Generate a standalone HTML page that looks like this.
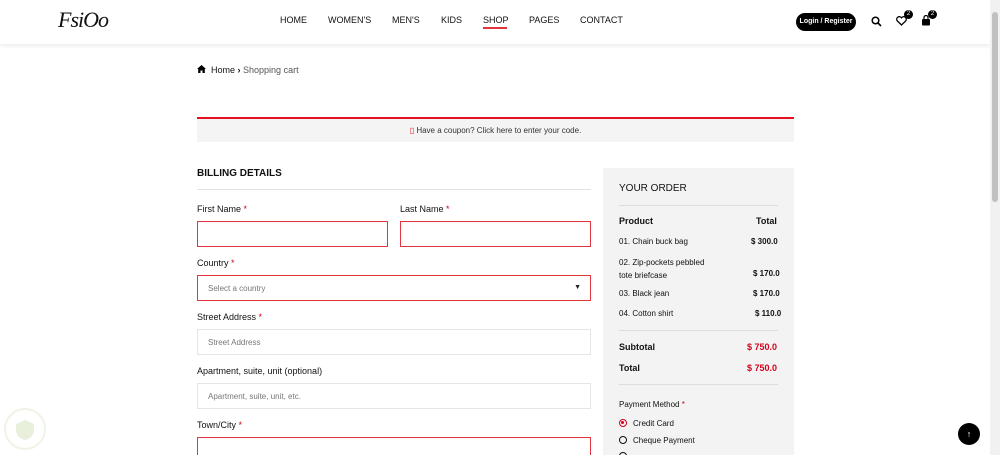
<!DOCTYPE html>
<html style="width:1000px;height:455px;overflow:hidden"><head><style>
*{margin:0;padding:0;box-sizing:border-box}
body{width:1000px;height:455px;overflow:hidden;background:#fff;font-family:"Liberation Sans",sans-serif;color:#111;position:relative}
.a{position:absolute}
header{position:absolute;left:0;top:0;width:990px;height:44px;background:#fff;box-shadow:0 2px 4px rgba(0,0,0,.08)}
.nav{font-size:9px;top:15px}
.lbl{font-size:9px;color:#111}
.lbl span{color:#d0021b}
.in{position:absolute;border:1px solid #e5e5e5;height:26px;font-size:8px;color:#777;padding:8px 10px}
.red{border-color:#e3343f}
.r{font-size:8px}
.sb{position:absolute;left:990px;top:0;width:10px;height:455px;background:#f1f1f1}
</style></head><body>
<header>
<div class="a" style="left:58px;top:7px;font-family:'Liberation Serif',serif;font-style:italic;font-size:22px;letter-spacing:-1px">FsiOo</div>
<div class="a nav" style="left:280px">HOME</div>
<div class="a nav" style="left:328px">WOMEN'S</div>
<div class="a nav" style="left:392px">MEN'S</div>
<div class="a nav" style="left:441px">KIDS</div>
<div class="a nav" style="left:483px">SHOP</div>
<div class="a" style="left:483px;top:27px;width:24px;height:2px;background:#e3343f"></div>
<div class="a nav" style="left:529px">PAGES</div>
<div class="a nav" style="left:580px">CONTACT</div>
<div class="a" style="left:796px;top:13px;width:60px;height:18px;background:#000;border-radius:9px;color:#fff;font-size:7px;font-weight:bold;text-align:center;line-height:18px">Login / Register</div>
<svg class="a" style="left:871px;top:16px" width="11" height="11" viewBox="0 0 11 11"><circle cx="4.5" cy="4.5" r="3.3" fill="none" stroke="#000" stroke-width="1.5"/><path d="M7 7l3 3" stroke="#000" stroke-width="1.6"/></svg>
<svg class="a" style="left:896px;top:16px" width="11" height="10" viewBox="0 0 11 10"><path d="M5.5 9L1.2 4.8A2.4 2.4 0 0 1 5.5 1.8A2.4 2.4 0 0 1 9.8 4.8Z" fill="none" stroke="#000" stroke-width="1.3"/></svg>
<div class="a" style="left:904px;top:10px;width:9px;height:9px;border-radius:50%;background:#000;color:#fff;font-size:6px;text-align:center;line-height:9px">2</div>
<svg class="a" style="left:921px;top:15px" width="10" height="11" viewBox="0 0 10 11"><path d="M3 4V2.5a2 2 0 0 1 4 0V4" fill="none" stroke="#000" stroke-width="1.2"/><rect x="1" y="4" width="8" height="6.5" rx="1" fill="#000"/></svg>
<div class="a" style="left:928px;top:10px;width:9px;height:9px;border-radius:50%;background:#000;color:#fff;font-size:6px;text-align:center;line-height:9px">2</div>
</header>
<svg class="a" style="left:197px;top:65px" width="9" height="8" viewBox="0 0 9 8"><path d="M4.5 0L0 4h1.2v4h2.3V5.5h2V8h2.3V4H9z" fill="#000"/></svg>
<div class="a" style="left:211px;top:65px;font-size:9px">Home <b style="font-size:9px">›</b> <span style="color:#555">Shopping cart</span></div>
<div class="a" style="left:197px;top:117px;width:597px;height:25px;background:#f4f4f4;border-top:2px solid #e3111f;font-size:8px;color:#333;text-align:center;line-height:23px"><span style="color:#e3111f">▯</span> Have a coupon? Click here to enter your code.</div>
<div class="a" style="left:197px;top:168px;font-size:10px;font-weight:bold">BILLING DETAILS</div>
<div class="a" style="left:197px;top:189px;width:394px;height:1px;background:#e2e2e2"></div>
<div class="a lbl" style="left:197px;top:204px">First Name <span>*</span></div>
<div class="a lbl" style="left:400px;top:204px">Last Name <span>*</span></div>
<div class="in red" style="left:197px;top:221px;width:191px"></div>
<div class="in red" style="left:400px;top:221px;width:191px"></div>
<div class="a lbl" style="left:197px;top:258px">Country <span>*</span></div>
<div class="in red" style="left:197px;top:275px;width:394px">Select a country<span style="position:absolute;right:9px;top:8px;font-size:7px;color:#222">▼</span></div>
<div class="a lbl" style="left:197px;top:312px">Street Address <span>*</span></div>
<div class="in" style="left:197px;top:329px;width:394px">Street Address</div>
<div class="a lbl" style="left:197px;top:366px">Apartment, suite, unit (optional)</div>
<div class="in" style="left:197px;top:383px;width:394px">Apartment, suite, unit, etc.</div>
<div class="a lbl" style="left:197px;top:420px">Town/City <span>*</span></div>
<div class="in red" style="left:197px;top:437px;width:394px;height:18px;border-bottom:none"></div>
<div class="a" style="left:603px;top:168px;width:191px;height:287px;background:#f3f3f3"></div>
<div class="a" style="left:619px;top:183px;font-size:10px">YOUR ORDER</div>
<div class="a" style="left:619px;top:205px;width:159px;height:1px;background:#ddd"></div>
<div class="a" style="left:619px;top:216px;font-size:9px;font-weight:bold">Product</div>
<div class="a" style="left:756px;top:216px;font-size:9px;font-weight:bold">Total</div>
<div class="a r" style="left:619px;top:237px">01. Chain buck bag</div><div class="a r" style="left:751px;top:237px;font-weight:bold">$ 300.0</div>
<div class="a r" style="left:619px;top:256px;line-height:13px">02. Zip-pockets pebbled<br>tote briefcase</div><div class="a r" style="left:753px;top:269px;font-weight:bold">$ 170.0</div>
<div class="a r" style="left:619px;top:289px">03. Black jean</div><div class="a r" style="left:753px;top:289px;font-weight:bold">$ 170.0</div>
<div class="a r" style="left:619px;top:309px">04. Cotton shirt</div><div class="a r" style="left:755px;top:309px;font-weight:bold">$ 110.0</div>
<div class="a" style="left:619px;top:330px;width:159px;height:1px;background:#ddd"></div>
<div class="a" style="left:619px;top:342px;font-size:9px;font-weight:bold">Subtotal</div><div class="a" style="left:747px;top:342px;font-size:9px;font-weight:bold;color:#d0021b">$ 750.0</div>
<div class="a" style="left:619px;top:363px;font-size:9px;font-weight:bold">Total</div><div class="a" style="left:747px;top:363px;font-size:9px;font-weight:bold;color:#d0021b">$ 750.0</div>
<div class="a" style="left:619px;top:384px;width:159px;height:1px;background:#ddd"></div>
<div class="a r" style="left:619px;top:400px">Payment Method <span style="color:#d0021b">*</span></div>
<div class="a" style="left:619px;top:419px;width:8px;height:8px;border:1.3px solid #d0021b;border-radius:50%"><div style="margin:1.3px;width:3px;height:3px;background:#d0021b;border-radius:50%"></div></div>
<div class="a r" style="left:633px;top:419px">Credit Card</div>
<div class="a" style="left:619px;top:436px;width:8px;height:8px;border:1.3px solid #111;border-radius:50%"></div>
<div class="a r" style="left:633px;top:436px">Cheque Payment</div>
<div class="a" style="left:619px;top:452px;width:8px;height:8px;border:1.3px solid #111;border-radius:50%"></div>
<div class="a" style="left:958px;top:423px;width:22px;height:22px;border-radius:50%;background:#000;color:#fff;font-size:9px;text-align:center;line-height:22px">↑</div>
<div class="a" style="left:4px;top:408px;width:42px;height:42px;border-radius:50%;border:2px solid #eef4e6"></div>
<svg class="a" style="left:13px;top:418px" width="24" height="24" viewBox="0 0 24 24"><path d="M12 2L3 6v6c0 5 4 9 9 10c5-1 9-5 9-10V6z" fill="#e8f0dc"/></svg>
<div class="sb"><div style="position:absolute;left:2px;top:12px;width:6px;height:190px;background:#c1c1c1;border-radius:3px"></div></div>
</body></html>
